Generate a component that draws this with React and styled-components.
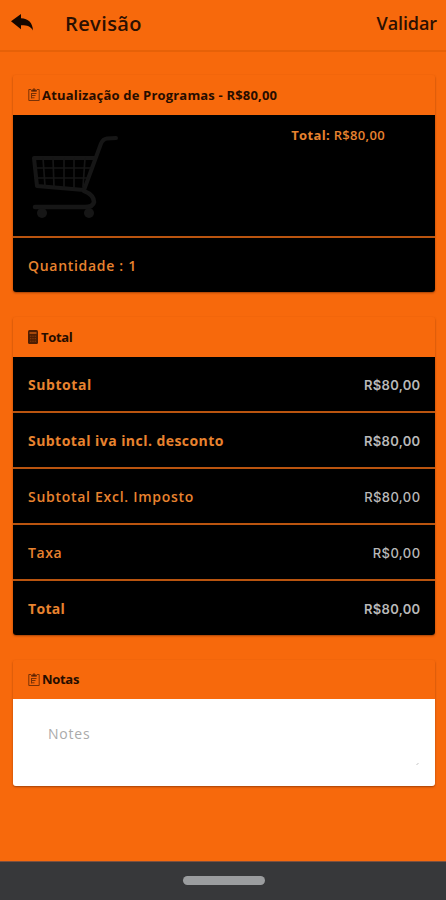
import React from "react";
import styled, { createGlobalStyle } from "styled-components";

const GlobalStyle = createGlobalStyle`
  * {
    box-sizing: border-box;
  }

  body {
    margin: 0;
    background-color: #f7690c;
    font-family: "Open Sans", "Noto Sans", sans-serif;
  }
`;

const Screen = styled.div`
  width: 446px;
  height: 900px;
  display: flex;
  flex-direction: column;
  overflow: hidden;
  background-color: #f7690c;
`;

const Toolbar = styled.header`
  height: 52px;
  flex: none;
  display: flex;
  align-items: center;
  padding: 0 9px 4px 11px;
  border-bottom: 2px solid #e66108;
`;

const Back = styled.button`
  width: 23px;
  height: 20px;
  padding: 0;
  border: none;
  background: none;
  display: flex;

  svg {
    display: block;
  }
`;

const PageTitle = styled.h1`
  flex: 1;
  margin: 0 0 0 31px;
  font-size: 20px;
  font-weight: 600;
  letter-spacing: 0.4px;
  color: #2b1002;
`;

const Validate = styled.button`
  padding: 0;
  border: none;
  background: none;
  font-family: inherit;
  font-size: 18px;
  font-weight: 600;
  letter-spacing: -0.1px;
  color: #2b1002;
`;

const Content = styled.main`
  flex: 1;
  display: flex;
  flex-direction: column;
  gap: 25px;
  padding: 23px 11px 0 13px;
`;

const Card = styled.section`
  overflow: hidden;
  border-radius: 3px;
  box-shadow: 0 1px 2px rgba(80, 25, 0, 0.5);
`;

const CardHeader = styled.div`
  height: ${(props) => props.$height}px;
  display: flex;
  align-items: center;
  gap: ${(props) => props.$gap || 2}px;
  padding: 0 15px 1px;
  background-color: #f7690c;
  color: #260d00;
  font-size: 13px;
  font-weight: 700;
  letter-spacing: ${(props) => props.$spacing || 0}px;

  svg {
    flex: none;
  }
`;

const Product = styled.div`
  height: 121px;
  display: flex;
  justify-content: space-between;
  padding: 11px 50px 0 18px;
  background-color: #000;
`;

const Price = styled.div`
  font-size: 13px;
  line-height: 18px;
  font-weight: 600;
  letter-spacing: 0.33px;
  color: #e8832f;

  b {
    font-weight: 700;
  }
`;

const Row = styled.div`
  height: ${(props) => props.$height || 56}px;
  display: flex;
  align-items: center;
  justify-content: space-between;
  padding: 0 15px;
  background-color: #000;
  border-top: ${(props) => (props.$first ? "none" : "2px solid #b9540f")};
  font-size: 14px;
  font-weight: ${(props) => (props.$strong ? 700 : 600)};
`;

const Label = styled.span`
  color: #e8832f;
  letter-spacing: ${(props) => props.$spacing || 0}px;
`;

const Amount = styled.span`
  padding-top: 1px;
  margin-right: -0.5px;
  font-family: Inter, "Open Sans", sans-serif;
  font-size: 13px;
  font-weight: ${(props) => (props.$strong ? 600 : 500)};
  color: #b9b9b9;
  letter-spacing: ${(props) => (props.$strong ? 0.3 : 0.42)}px;
`;

const NotesBox = styled.div`
  height: 87px;
  display: flex;
  align-items: flex-end;
  padding: 0 15px 20px 35px;
  background-color: #fff;

  svg {
    flex: none;
  }
`;

const Notes = styled.textarea`
  flex: 1;
  height: 42px;
  padding: 0;
  border: none;
  outline: none;
  resize: none;
  background-color: transparent;
  font-family: inherit;
  font-size: 14px;
  font-weight: 500;
  line-height: 19px;
  letter-spacing: 0.8px;

  &::placeholder {
    color: #aaa;
    opacity: 1;
  }
`;

const NavBar = styled.footer`
  height: 39px;
  flex: none;
  display: flex;
  justify-content: center;
  padding: 14px 0 0 1px;
  background-color: #37383a;
  border-top: 1px solid #7d5140;
`;

const Handle = styled.div`
  width: 82px;
  height: 9px;
  border-radius: 5px;
  background-color: #9b9d9f;
`;

const BackArrow = () => (
  <svg width="23" height="20" viewBox="0 0 23 20" fill="#150700">
    <path d="M0 8.3 10 1v4.3c7.300.3 11.700 4.600 12 12.200-2.500-4.400-6-5.400-12-5.300v4z" />
  </svg>
);

const ClipboardIcon = () => (
  <svg width="12" height="13" viewBox="0 0 12 13" fill="none" stroke="#7a3206">
    <path d="M3 1.5H.8v11h10.4v-11H9" />
    <path d="M3.5 3.2h5V2H7L6 .5 5 2H3.5z" fill="#4b1c02" />
    <path d="M4 5.5h4.5M4 7.5h3.5M4 9.8h2.5M3.5 5v5.5" />
  </svg>
);

const CalculatorIcon = () => (
  <svg width="10" height="14" viewBox="0 0 10 14">
    <rect width="10" height="14" rx="1.5" fill="#4e1d02" />
    <path d="M1.5 2h7v2h-7z" fill="#a7480c" />
    <path
      d="M2 6.2h6M2 8.7h6M2 11.2h6"
      stroke="#8b3b09"
      strokeDasharray="1.4 0.9"
    />
  </svg>
);

const CartIcon = () => (
  <svg
    width="90"
    height="94"
    viewBox="0 0 90 94"
    fill="none"
    stroke="#161616"
    strokeLinecap="round"
    strokeLinejoin="round"
  >
    <path d="M85 12l-9 .5q-4 .5-6 5L53 64 6 60 3 32h61" strokeWidth="4" />
    <path d="M53 65q10 4 10 11-1 5-9 5H4" strokeWidth="4.5" />
    <path
      d="M12 32l2 28M22 32l1 29M33 32v29M43 32v30M54 32l-2 29M3 42h58M4 52h53"
      strokeWidth="1.7"
    />
    <circle cx="11" cy="87" r="5" fill="#161616" stroke="none" />
    <circle cx="58" cy="87" r="5" fill="#161616" stroke="none" />
  </svg>
);

const ResizeGrip = () => (
  <svg width="5" height="4" viewBox="0 0 5 4" stroke="#c4c4c4">
    <path d="M1.500 3 3.500 1" />
  </svg>
);

const totals = [
  { label: "Subtotal", amount: "R$80,00", strong: true, spacing: 0.55 },
  {
    label: "Subtotal iva incl. desconto",
    amount: "R$80,00",
    strong: true,
    spacing: 0.45,
  },
  { label: "Subtotal Excl. Imposto", amount: "R$80,00", spacing: 0.72 },
  { label: "Taxa", amount: "R$0,00", spacing: 0.6 },
  { label: "Total", amount: "R$80,00", strong: true, spacing: 0.3 },
];

const App = () => {
  return (
    <>
      <GlobalStyle />
      <Screen>
        <Toolbar>
          <Back aria-label="Voltar">
            <BackArrow />
          </Back>
          <PageTitle>Revisão</PageTitle>
          <Validate>Validar</Validate>
        </Toolbar>
        <Content>
          <Card>
            <CardHeader $height={40} $spacing={0.18}>
              <ClipboardIcon />
              Atualização de Programas - R$80,00
            </CardHeader>
            <Product>
              <CartIcon />
              <Price>
                <b>Total:</b> R$80,00
              </Price>
            </Product>
            <Row $height={56}>
              <Label $spacing={0.7}>Quantidade : 1</Label>
            </Row>
          </Card>

          <Card>
            <CardHeader $height={40} $gap={3} $spacing={-0.3}>
              <CalculatorIcon />
              Total
            </CardHeader>
            {totals.map((item, index) => (
              <Row
                key={item.label}
                $first={index === 0}
                $height={index === 0 ? 54 : 56}
                $strong={item.strong}
              >
                <Label $spacing={item.spacing}>{item.label}</Label>
                <Amount $strong={item.strong}>{item.amount}</Amount>
              </Row>
            ))}
          </Card>

          <Card>
            <CardHeader $height={39} $spacing={-0.3}>
              <ClipboardIcon />
              Notas
            </CardHeader>
            <NotesBox>
              <Notes placeholder="Notes" />
              <ResizeGrip />
            </NotesBox>
          </Card>
        </Content>
        <NavBar>
          <Handle />
        </NavBar>
      </Screen>
    </>
  );
};

export default App;
